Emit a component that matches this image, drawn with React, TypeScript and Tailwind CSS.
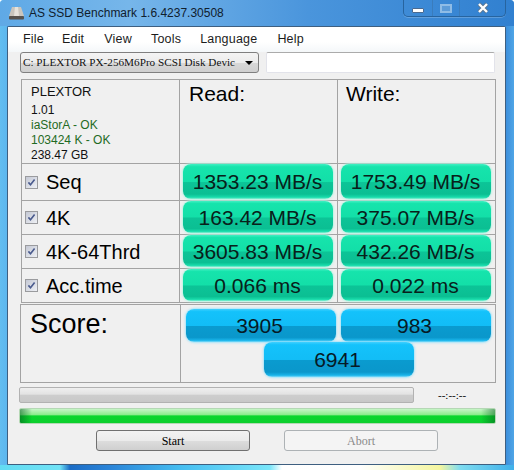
// App.tsx
const sans = 'font-["Liberation_Sans",Arial,sans-serif]';

const greenBtn =
  'flex w-[150px] items-center justify-center rounded-[8px] bg-[linear-gradient(to_bottom,#40f0c2_0%,#16e4ac_8%,#13dfa8_50%,#0cc497_53%,#0bbf93_86%,#18dcab_95%,#8af2d6_100%)] pr-px text-[21px] leading-none text-[#08201a] shadow-[0_0_2px_1px_rgba(170,245,225,0.8)]';

const blueBtn =
  'flex h-[33px] w-[150px] items-center justify-center rounded-[8px] bg-[linear-gradient(to_bottom,#3fd0ff_0%,#14c2fb_8%,#12bdf6_50%,#0a9bcf_52%,#0a97cb_86%,#18b4ea_95%,#80dcfa_100%)] pr-[3px] text-[21px] leading-none text-[#061a26] shadow-[0_0_2px_1px_rgba(150,225,250,0.8)]';

const rows = [
  { label: 'Seq', read: '1353.23 MB/s', write: '1753.49 MB/s', h: 'h-[37px]' },
  { label: '4K', read: '163.42 MB/s', write: '375.07 MB/s', h: 'h-[34px]' },
  { label: '4K-64Thrd', read: '3605.83 MB/s', write: '432.26 MB/s', h: 'h-[34px]' },
  { label: 'Acc.time', read: '0.066 ms', write: '0.022 ms', h: 'h-[34px]' },
];

const Check = () => (
  <span className="flex h-[13px] w-[13px] shrink-0 items-center justify-center border border-[#9a9b9e] bg-[linear-gradient(135deg,#c4c8d4,#eef0f5)]">
    <svg width="9" height="9" viewBox="0 0 9 9">
      <path d="M1.4 4.4 L3.5 6.8 L7.6 1.6" fill="none" stroke="#4a5b8e" strokeWidth="1.6" />
    </svg>
  </span>
);

const DriveIcon = () => (
  <svg width="17" height="14" viewBox="0 0 17 14" className="shrink-0">
    <path d="M4 1 H13 L16 10 H1 Z" fill="#c9c5bd" />
    <path d="M7 1 H10 L11 10 H6 Z" fill="#e6e3dc" />
    <rect x="1" y="10" width="15" height="3.5" rx="1" fill="#57534e" />
  </svg>
);

const WindowButtons = () => (
  <div className="flex h-[17px] w-[103px] self-start rounded-b-[5px] border border-t-0 border-[#27649f] shadow-[0_1px_0_rgba(255,255,255,0.2)]">
    <div className="flex w-[29px] items-center justify-center border-r border-[#3a7cbc]">
      <span className="mt-[4px] block h-[5px] w-[12px] rounded-[1px] border border-[#4a6a90] bg-white" />
    </div>
    <div className="flex w-[27px] items-center justify-center border-r border-[#3a7cbc]">
      <span className="block h-[9px] w-[12px] border-2 border-[#8fbce6] bg-[#5c9bd8]" />
    </div>
    <div className="flex flex-1 items-center justify-center">
      <svg width="14" height="12" viewBox="0 0 14 12">
        <path d="M3 2 L11 10 M11 2 L3 10" stroke="#5a7590" strokeWidth="4" />
        <path d="M3 2 L11 10 M11 2 L3 10" stroke="#ffffff" strokeWidth="2.4" />
      </svg>
    </div>
  </div>
);

export default function App() {
  return (
    <div
      className={`${sans} relative h-[470px] w-[514px] overflow-hidden rounded-t-[4px] bg-[linear-gradient(to_right,#62bdf0_0px,#5cb6ee_7px,#3a8ad6_7px,#3a8ad6_506px,#3c8fdc_506px,#4fa5e6_514px)]`}
    >
      {/* title bar */}
      <div className="flex h-[26px] items-center bg-[linear-gradient(to_right,#5fa9e6,#76b6ea_25%,#4a95dc_60%,#3180d0)] pl-[8px] pr-[8px]">
        <DriveIcon />
        <span className="ml-[4px] text-[12px] text-[#10202e]">
          AS SSD Benchmark 1.6.4237.30508
        </span>
        <div className="ml-auto flex self-stretch">
          <WindowButtons />
        </div>
      </div>

      {/* client area */}
      <div className="ml-[7px] flex h-[439px] w-[499px] flex-col rounded-t-[2px] border border-[#3e5f80] bg-[#f0f0f0] text-black">
        {/* menu */}
        <div className="flex h-[25px] shrink-0 items-center bg-[linear-gradient(to_bottom,#ffffff_60%,#f4f7f9)] text-[12.5px] tracking-[0.2px] text-[#1c1c1c]">
          <span className="ml-[15px]">File</span>
          <span className="ml-[18px]">Edit</span>
          <span className="ml-[20px]">View</span>
          <span className="ml-[19px]">Tools</span>
          <span className="ml-[19px]">Language</span>
          <span className="ml-[20px]">Help</span>
        </div>

        {/* drive select */}
        <div className="flex h-[21px] shrink-0 items-stretch pl-[12px]">
          <div className="flex w-[239px] items-center justify-between rounded-[3px] border border-[#7f7f7f] bg-[linear-gradient(to_bottom,#f4f4f4,#ececec_50%,#d8d8d8_52%,#cfcfcf)] pl-[2px] pr-[5px]">
            <span className='whitespace-nowrap font-["Liberation_Serif",serif] text-[11.2px] text-[#111]'>
              C: PLEXTOR PX-256M6Pro SCSI Disk Devic
            </span>
            <span className="mt-[1px] h-0 w-0 border-x-[4px] border-t-[4px] border-x-transparent border-t-black" />
          </div>
          <div className="ml-[7px] w-[229px] rounded-[2px] border border-[#e2e3ea] border-t-[#ababab] bg-white" />
        </div>

        {/* results table */}
        <div className="ml-[13px] mt-[6px] grid w-[475px] shrink-0 grid-cols-[158px_158px_158px] border-l border-t border-[#a3a3a3]">
          <div className="flex h-[84px] flex-col border-b border-r border-[#a3a3a3] pl-[9px] pt-[3px] text-[12px] leading-[15px] text-[#111]">
            <span className="mb-[3px] text-[13px] leading-[17px]">PLEXTOR</span>
            <span>1.01</span>
            <span className="text-[#1f6b24]">iaStorA - OK</span>
            <span className="text-[#1f6b24]">103424 K - OK</span>
            <span>238.47 GB</span>
          </div>
          <div className="h-[84px] border-b border-r border-[#a3a3a3] pl-[9px] pt-px text-[21px] leading-[26px]">
            Read:
          </div>
          <div className="h-[84px] border-b border-r border-[#a3a3a3] pl-[8px] pt-px text-[21px] leading-[26px]">
            Write:
          </div>

          {rows.map((r) => (
            <div key={r.label} className="contents">
              <div className={`${r.h} flex items-center border-b border-r border-[#a3a3a3] pl-[3px]`}>
                <Check />
                <span className="ml-[8px] whitespace-nowrap text-[20px] leading-none">{r.label}</span>
              </div>
              <div className={`${r.h} flex items-stretch border-b border-r border-[#a3a3a3] pb-px pl-[3px]`}>
                <div className={greenBtn}>{r.read}</div>
              </div>
              <div className={`${r.h} flex items-stretch border-b border-r border-[#a3a3a3] pb-px pl-[3px]`}>
                <div className={greenBtn}>{r.write}</div>
              </div>
            </div>
          ))}
        </div>

        {/* score */}
        <div className="ml-[12px] mt-px grid h-[79px] w-[476px] shrink-0 grid-cols-[160px_315px] border border-[#a3a3a3]">
          <div className="border-r border-[#a3a3a3] pl-[9px] pt-[3px] text-[27px] leading-[33px]">Score:</div>
          <div className="flex flex-col pl-[5px] pt-[4px]">
            <div className="flex gap-[5px]">
              <div className={blueBtn}>3905</div>
              <div className={blueBtn}>983</div>
            </div>
            <div className="ml-[78px]">
              <div className={`${blueBtn} h-[35px]`}>6941</div>
            </div>
          </div>
        </div>

        {/* progress */}
        <div className="ml-[11px] mt-[4px] flex h-[16px] shrink-0 items-center">
          <div className="h-full w-[395px] rounded-[2px] border border-[#b2b2b2] bg-[linear-gradient(to_bottom,#efefef,#e2e2e2_45%,#cdcdcd_50%,#c8c8c8)]" />
          <span className='ml-[24px] font-["Liberation_Serif",serif] text-[11px] leading-none'>--:--:--</span>
        </div>
        <div className="ml-[11px] mt-[5px] h-[16px] w-[477px] shrink-0 rounded-[2px] border border-[#b5d8b5] bg-[linear-gradient(to_right,rgba(0,90,30,0.55),rgba(0,90,30,0)_12px,rgba(0,90,30,0)_calc(100%-14px),rgba(0,90,30,0.5)),linear-gradient(to_bottom,#c8f5c8,#8cec8c_40%,#0ad62c_50%,#0ccf2e)]" />

        {/* buttons */}
        <div className="ml-[88px] mt-[6px] flex shrink-0 gap-[34px] font-['Liberation_Serif',serif] text-[12px]">
          <button className="h-[21px] w-[154px] rounded-[3px] border border-[#707070] bg-[linear-gradient(to_bottom,#f2f2f2,#ebebeb_50%,#dddddd_52%,#cfcfcf)] text-black">
            Start
          </button>
          <button className="h-[21px] w-[154px] rounded-[3px] border border-[#adb2b5] bg-[#f4f4f4] text-[#8a8a8a]">
            Abort
          </button>
        </div>
      </div>

      {/* aero glass strip under the window */}
      <div className="h-[5px] bg-[linear-gradient(to_right,#62dcf2_0px,#70e2f6_60px,#1b6cc6_70px,#2a84d8_110px,#45bdf0_180px,#7ae6fa_270px,#ffffff_282px,#fefefe_360px,#f4f6a0_440px,#7fdcf0_460px,#3fb0ea_514px)]" />
    </div>
  );
}
